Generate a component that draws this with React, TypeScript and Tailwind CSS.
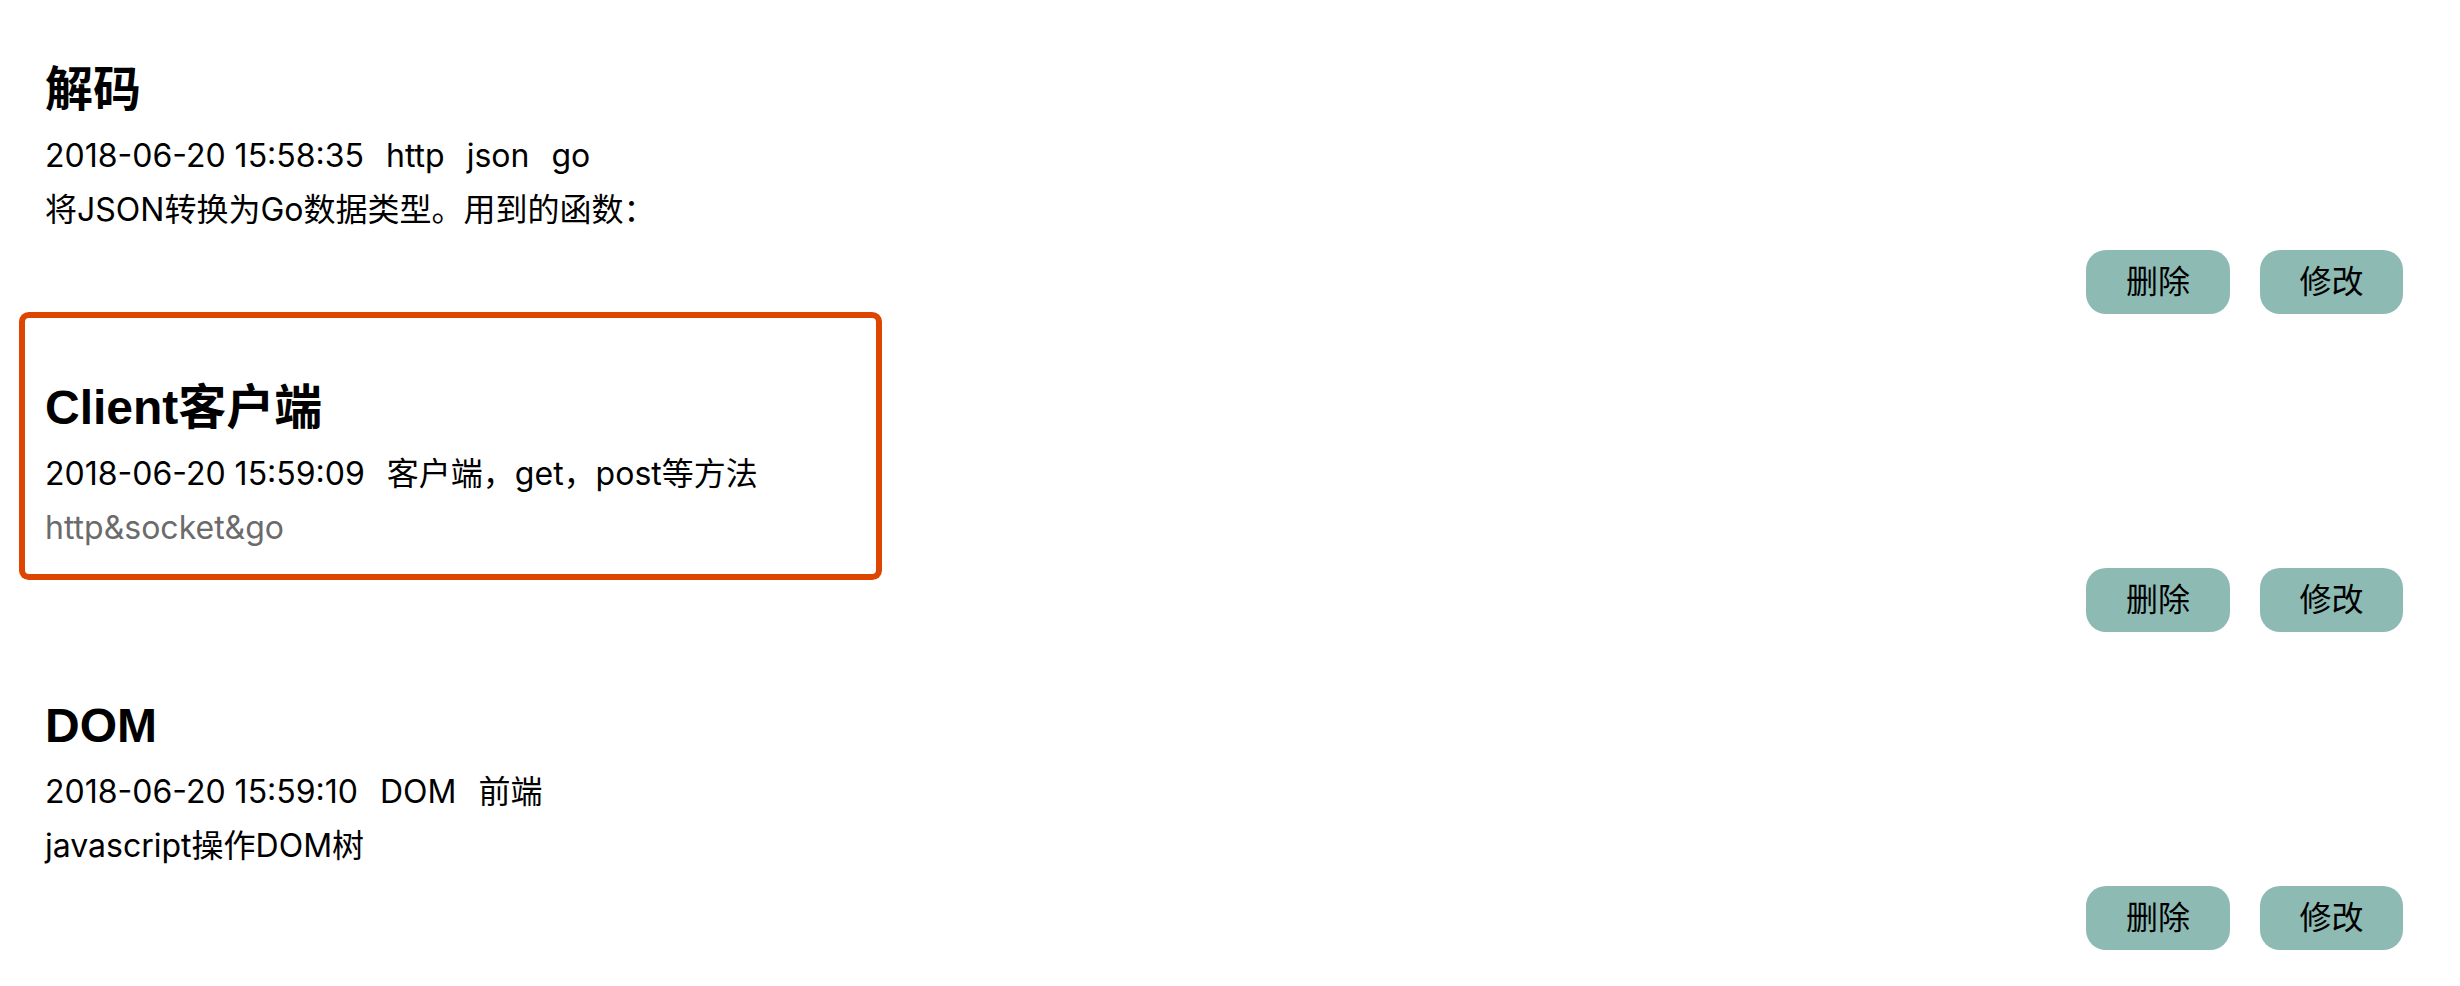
import React from 'react';

interface Article {
  id: number;
  title: string;
  time: string;
  tags: string[];
  summary: string;
  muted?: boolean;
}

const articles: Article[] = [
  {
    id: 1,
    title: '解码',
    time: '2018-06-20 15:58:35',
    tags: ['http', 'json', 'go'],
    summary: '将JSON转换为Go数据类型。用到的函数：',
  },
  {
    id: 2,
    title: 'Client客户端',
    time: '2018-06-20 15:59:09',
    tags: ['客户端，get，post等方法'],
    summary: 'http&socket&go',
    muted: true,
  },
  {
    id: 3,
    title: 'DOM',
    time: '2018-06-20 15:59:10',
    tags: ['DOM', '前端'],
    summary: 'javascript操作DOM树',
  },
];

function ArticleItem({ article, active }: { article: Article; active: boolean }) {
  return (
    <div className="flex flex-col">
      {/* Content */}
      <div
        className={
          active
            ? 'ml-[25px] w-[851px] h-[256px] pl-[20px] pt-[58px] rounded-[4px] ring-6 ring-[#de4500]'
            : 'ml-[25px] w-[851px] h-[256px] pl-[20px] pt-[58px]'
        }
      >
        <h2 className="text-[48px] leading-[64px] font-bold text-black font-['Liberation_Sans','Noto_Sans_CJK_SC',sans-serif]">
          {article.title}
        </h2>
        <div className="mt-[7px] flex items-center gap-[22px] text-[32px] leading-[54px] text-black whitespace-nowrap">
          <span>{article.time}</span>
          {article.tags.map((tag) => (
            <span key={tag}>{tag}</span>
          ))}
        </div>
        <p
          className={
            article.muted
              ? 'text-[32px] leading-[54px] text-[#6b6b6b] whitespace-nowrap'
              : 'text-[32px] leading-[54px] text-black whitespace-nowrap'
          }
        >
          {article.summary}
        </p>
      </div>

      {/* Actions */}
      <div className="-mt-[6px] flex justify-end gap-[30px] pr-[57px]">
        <button className="w-[144px] h-[64px] rounded-[20px] bg-[#8dbab3] text-[32px] text-black">删除</button>
        <button className="w-[143px] h-[64px] rounded-[20px] bg-[#8dbab3] text-[32px] text-black">修改</button>
      </div>
    </div>
  );
}

export default function App() {
  return (
    <div className="min-h-screen w-full bg-white font-['Inter','Noto_Sans_CJK_SC',sans-serif]">
      <main className="flex flex-col gap-[4px]">
        {articles.map((article) => (
          <ArticleItem key={article.id} article={article} active={article.id === 2} />
        ))}
      </main>
    </div>
  );
}
